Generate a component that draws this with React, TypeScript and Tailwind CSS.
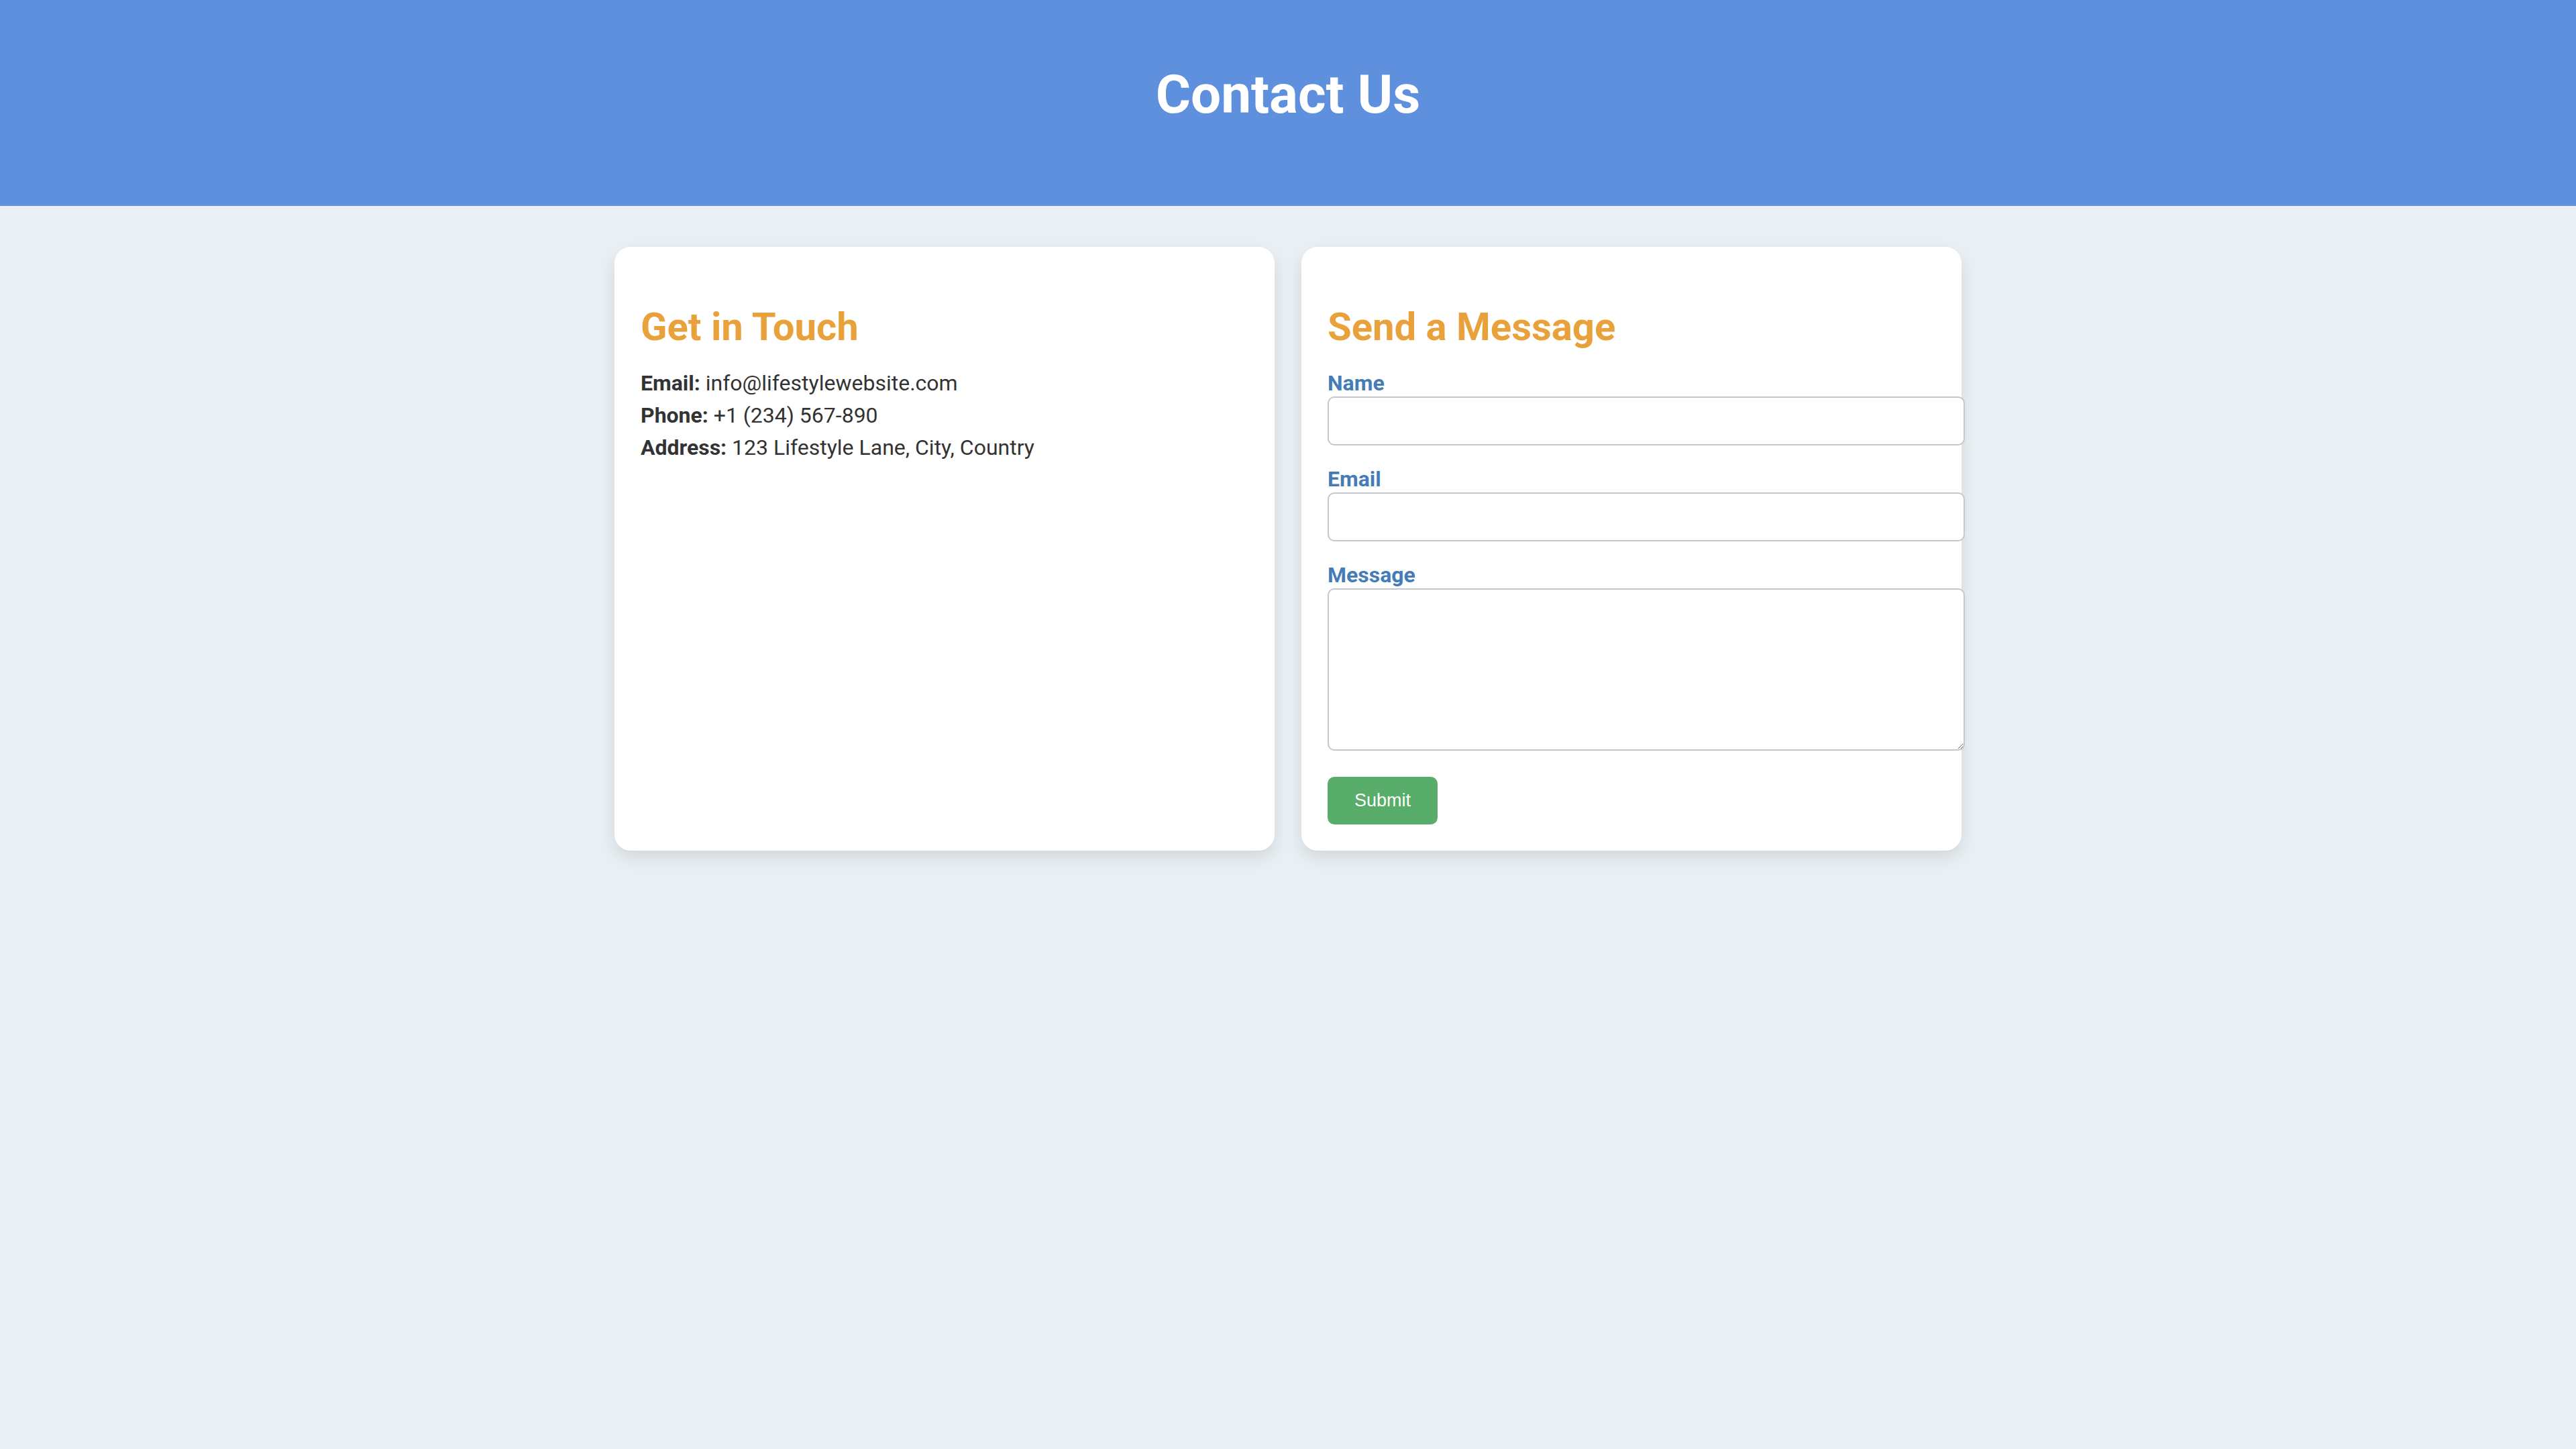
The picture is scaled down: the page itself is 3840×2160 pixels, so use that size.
import React from "react";

export default function App() {
  return (
    <div className="min-h-[2160px] bg-[#e9eff2] font-['Roboto',sans-serif] text-[#333333]">
      <header className="h-[307px] bg-[#5e90dd] pt-[94px] text-center">
        <h1 className="text-[80px] leading-[94px] font-bold text-white">Contact Us</h1>
      </header>
      <main className="mx-auto mt-[61px] grid w-[2008px] grid-cols-2 gap-[40px]">
        <section className="rounded-[24px] bg-white p-[39px] shadow-[0_10px_25px_rgba(0,0,0,0.1)]">
          <h2 className="mt-[46px] mb-[25px] text-[58px] leading-[69px] font-bold text-[#e9a23b]">Get in Touch</h2>
          <p className="text-[32px] leading-[48px]">
            <strong className="font-bold">Email:</strong> info@lifestylewebsite.com
          </p>
          <p className="text-[32px] leading-[48px]">
            <strong className="font-bold">Phone:</strong> +1 (234) 567-890
          </p>
          <p className="text-[32px] leading-[48px]">
            <strong className="font-bold">Address:</strong> 123 Lifestyle Lane, City, Country
          </p>
        </section>
        <section className="rounded-[24px] bg-white p-[39px] shadow-[0_10px_25px_rgba(0,0,0,0.1)]">
          <h2 className="mt-[46px] mb-[30px] text-[58px] leading-[69px] font-bold text-[#e9a23b]">Send a Message</h2>
          <form onSubmit={(e) => e.preventDefault()}>
            <label htmlFor="name" className="block text-[32px] leading-[38px] font-bold text-[#457cb8]">Name</label>
            <input
              id="name"
              type="text"
              className="mt-[1px] mb-[31px] box-content block h-[29px] w-full rounded-[10px] border-2 border-[#c4c7cb] bg-white px-[20px] py-[20px] text-[32px] outline-none"
            />
            <label htmlFor="email" className="block text-[32px] leading-[38px] font-bold text-[#457cb8]">Email</label>
            <input
              id="email"
              type="email"
              className="mt-[1px] mb-[31px] box-content block h-[29px] w-full rounded-[10px] border-2 border-[#c4c7cb] bg-white px-[20px] py-[20px] text-[32px] outline-none"
            />
            <label htmlFor="message" className="block text-[32px] leading-[38px] font-bold text-[#457cb8]">Message</label>
            <textarea
              id="message"
              className="mt-[1px] mb-[39px] box-content block h-[198px] w-full resize rounded-[10px] border-2 border-[#c4c7cb] bg-white px-[20px] py-[20px] text-[32px] outline-none"
            />
            <button
              type="submit"
              className="block h-[71px] rounded-[10px] bg-[#57ad69] px-[40px] font-['Liberation_Sans',Arial,sans-serif] text-[27px] text-white"
            >
              Submit
            </button>
          </form>
        </section>
      </main>
    </div>
  );
}
